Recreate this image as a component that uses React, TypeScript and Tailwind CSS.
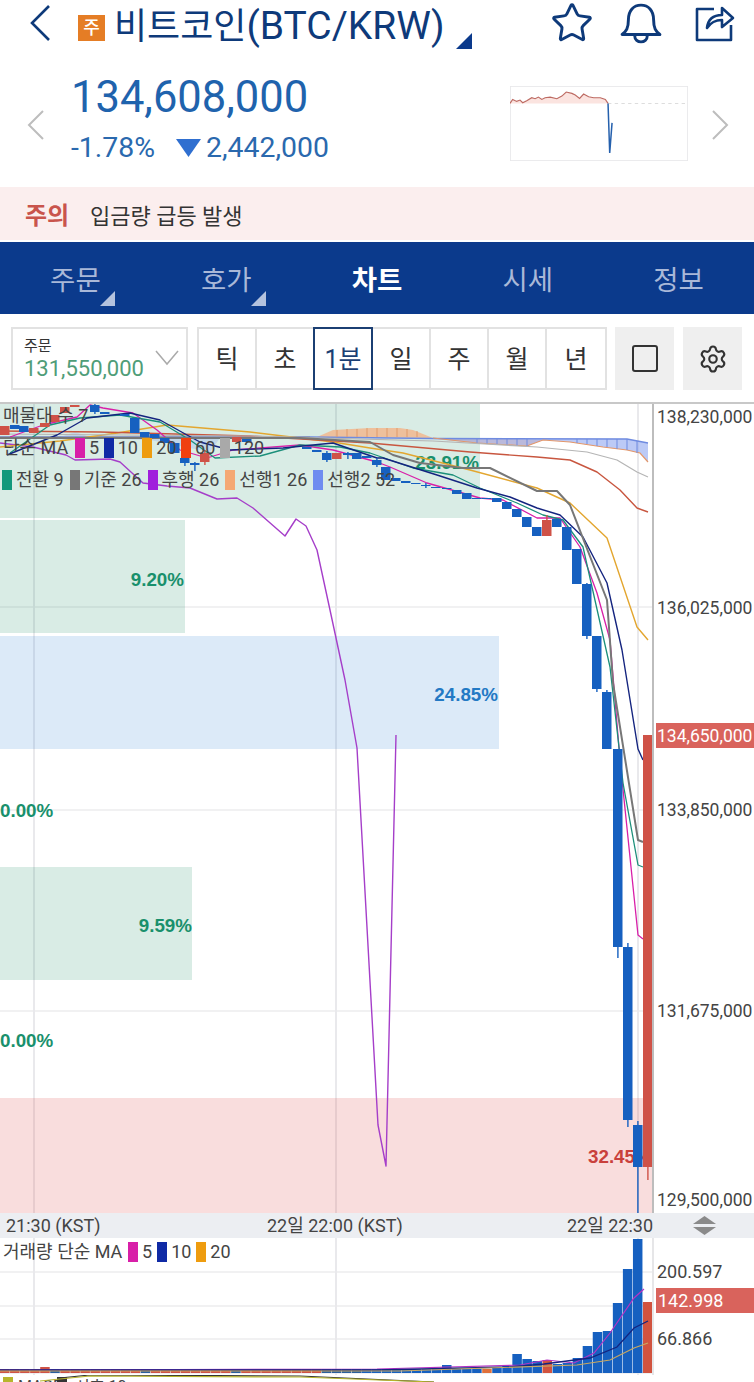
import { Settings, Star } from 'lucide-react';

const BLUE = '#1660c0';
const RED = '#cf5247';

// [x, top, bottom, colour, wickTop, wickBottom]
type Candle = [number, number, number, string, number?, number?];

const candles: Candle[] = [
  [0, 426, 435, RED],
  [10, 425, 429, BLUE],
  [19, 426, 432, BLUE],
  [29, 428, 433, RED],
  [40, 423, 427, RED],
  [50, 415, 422, RED],
  [60, 407, 413, RED],
  [70, 405, 407, RED],
  [90, 405, 412, BLUE, 404, 414],
  [100, 412, 414, BLUE],
  [120, 414, 416, BLUE],
  [130, 418, 433, BLUE],
  [140, 432, 437, BLUE],
  [150, 434, 438, BLUE],
  [160, 438, 443, BLUE],
  [170, 443, 453, BLUE],
  [180, 458, 463, BLUE, 453, 466],
  [190, 463, 465, BLUE, 462, 471],
  [200, 453, 462, RED, 450, 465],
  [232, 437, 442, RED],
  [242, 439, 442, BLUE],
  [302, 447, 449, BLUE],
  [312, 450, 452, BLUE],
  [322, 453, 460, BLUE, 451, 462],
  [332, 453, 459, RED],
  [343, 453, 455, BLUE, 452, 459],
  [352, 453, 459, BLUE],
  [362, 456, 458, BLUE],
  [372, 460, 465, BLUE, 458, 467],
  [381, 467, 480, BLUE],
  [391, 478, 481, BLUE],
  [401, 481, 483, BLUE],
  [411, 483, 484, BLUE],
  [421, 485, 486, BLUE, 483, 488],
  [431, 487, 488, BLUE],
  [442, 488, 489, BLUE],
  [452, 490, 494, BLUE],
  [462, 493, 499, BLUE],
  [472, 498, 499, BLUE],
  [482, 498, 499, BLUE],
  [492, 498, 502, BLUE],
  [502, 502, 509, BLUE],
  [512, 509, 517, BLUE],
  [522, 517, 527, BLUE],
  [532, 527, 536, BLUE],
  [542, 520, 536, RED, 515, 536],
  [552, 519, 527, BLUE],
  [562, 527, 550, BLUE],
  [572, 549, 584, BLUE],
  [582, 584, 636, BLUE, 583, 639],
  [592, 636, 689, BLUE, 636, 692],
  [602, 692, 749, BLUE, 690, 749],
  [613, 749, 947, BLUE, 749, 958],
  [623, 947, 1120, BLUE, 943, 1127],
  [633, 1125, 1167, BLUE, 1121, 1213],
  [643, 735, 1167, RED, 735, 1180],
];

const lines: [string, number, string][] = [
  ['#a53ec9', 1.4, '0,443 33,447 66,455 75,460 110,459 120,462 143,483 167,486 190,488 217,499 237,498 253,508 285,536 296,519 306,526 317,550 330,610 345,680 357,748 378,1125 386,1166 396,735'],
  ['#e3a62f', 1.4, '0,447 60,441 117,433 167,425 250,432 333,442 370,448 403,453 470,470 537,488 570,503 607,538 637,627 648,640'],
  ['#c8563f', 1.4, '0,431 100,432 250,436 370,443 470,452 537,457 570,460 597,472 620,490 637,508 648,512'],
  ['#b5b5b5', 1.2, '0,434 250,436 433,441 537,447 587,452 617,460 637,472 648,477'],
  ['#d81fa8', 1.3, '10,437 43,425 77,417 90,405 103,408 133,413 157,430 180,450 207,458 233,450 300,445 333,450 377,462 390,467 427,483 480,498 503,500 537,518 560,518 580,547 597,593 610,640 620,760 638,935 643,939'],
  ['#1b8f7a', 1.3, '10,453 50,425 80,418 120,415 160,422 190,440 215,458 260,456 300,445 340,447 370,453 413,468 453,475 480,488 517,503 543,515 563,520 583,547 610,667 623,783 638,865 643,867'],
  ['#14247f', 1.4, '7,455 57,435 87,418 130,413 160,420 187,435 200,442 230,450 283,448 333,443 377,458 383,458 437,475 477,488 510,497 537,508 560,515 583,537 607,583 622,650 638,749 643,760'],
  ['#777777', 2, '0,438 300,438 370,442 393,455 420,463 463,468 490,468 537,491 557,491 570,505 607,600 613,683 638,840 643,842'],
];

// hatching of the ichimoku cloud: [x, top, bottom, colour]
const hatch: [number, number, number, string][] = [
  [337, 430, 437, '#e09a6a'],
  [347, 429, 437, '#e09a6a'],
  [357, 429, 437, '#e09a6a'],
  [367, 428, 437, '#e09a6a'],
  [377, 428, 437, '#e09a6a'],
  [387, 428, 437, '#e09a6a'],
  [397, 428, 437, '#e09a6a'],
  [407, 429, 437, '#e09a6a'],
  [417, 431, 437, '#e09a6a'],
  [477, 439, 443, '#6f8be0'],
  [487, 439, 444, '#6f8be0'],
  [497, 439, 444, '#6f8be0'],
  [507, 439, 445, '#6f8be0'],
  [517, 439, 446, '#6f8be0'],
  [527, 439, 446, '#6f8be0'],
  [577, 439, 443, '#6f8be0'],
  [587, 439, 444, '#6f8be0'],
  [597, 439, 446, '#6f8be0'],
  [607, 439, 447, '#6f8be0'],
  [617, 439, 449, '#6f8be0'],
  [627, 439, 450, '#6f8be0'],
  [637, 441, 453, '#6f8be0'],
];

// tops of the volume bars, counted from the last bar leftwards
const volumeTops = [1302, 1239, 1269, 1303, 1331, 1332, 1346, 1358, 1363, 1364, 1360, 1361, 1359, 1354, 1366, 1368, 1369, 1369, 1369, 1369, 1365, 1369, 1369, 1369, 1369, 1370, 1369, 1369, 1370];

function Legend({ color, label }: { color: string; label: string }) {
  return (
    <span className="flex items-center gap-[4px]">
      <span className="h-[20px] w-[10px]" style={{ backgroundColor: color }} />
      <span>{label}</span>
    </span>
  );
}

function PriceChart() {
  return (
    <div className="relative h-[809px] w-[654px] overflow-hidden border-r-2 border-[#bdbdbd]">
      <svg className="absolute left-0 top-0" width="654" height="809" viewBox="0 404 654 809">
        {[607, 810, 1011].map((y) => (
          <line key={y} x1="0" x2="652" y1={y} y2={y} stroke="#ececee" strokeWidth="1.5" />
        ))}
        {[34, 336, 638].map((x) => (
          <line key={x} x1={x} x2={x} y1="404" y2="1213" stroke="#e9e9ec" strokeWidth="2" />
        ))}
        <rect x="0" y="404" width="480" height="114" fill="#12875f" fillOpacity="0.16" />
        <rect x="0" y="520" width="185" height="113" fill="#12875f" fillOpacity="0.16" />
        <rect x="0" y="636" width="499" height="113" fill="#2f80d8" fillOpacity="0.17" />
        <rect x="0" y="867" width="192" height="113" fill="#12875f" fillOpacity="0.16" />
        <rect x="0" y="1098" width="652" height="115" fill="#e04c4c" fillOpacity="0.19" />
      </svg>

      <div className="font-['Liberation_Sans',sans-serif] text-[18.8px] font-bold leading-[22px]">
        <span className="absolute right-[173px] top-[48px] text-[#19906c]">23.91%</span>
        <span className="absolute right-[468px] top-[165px] text-[#19906c]">9.20%</span>
        <span className="absolute right-[154px] top-[280px] text-[#2379c4]">24.85%</span>
        <span className="absolute left-0 top-[396px] text-[#19906c]">0.00%</span>
        <span className="absolute right-[460px] top-[511px] text-[#19906c]">9.59%</span>
        <span className="absolute left-0 top-[626px] text-[#19906c]">0.00%</span>
        <span className="absolute left-[588px] top-[742px] text-[#c9403c]">32.45%</span>
      </div>

      <svg className="absolute left-0 top-0" width="654" height="809" viewBox="0 404 654 809">
        <polygon points="317,437 333,430 370,428 400,428 413,430 433,438" fill="#f4b183" fillOpacity="0.75" />
        <polygon points="433,438 477,443 527,446 543,440 510,439" fill="#f4b183" fillOpacity="0.55" />
        <polygon points="433,439 627,439 648,443 648,462 640,453 627,450 603,447 570,442 543,440 527,446 477,443" fill="#8fa6f0" fillOpacity="0.6" />
        <polyline points="0,437 310,437 433,438.5 627,439 648,443" fill="none" stroke="#6f8be0" strokeWidth="1.5" />
        <polyline points="433,438 477,443 527,446 543,440 570,442 603,447 627,450 640,453 648,462" fill="none" stroke="#e3976a" strokeWidth="1.2" />
        {hatch.map(([x, top, bottom, color]) => (
          <line key={x} x1={x} x2={x} y1={top} y2={bottom} stroke={color} strokeWidth="1" />
        ))}
        <rect x="0" y="436" width="310" height="3" fill="#8a93b0" fillOpacity="0.6" />
        <polygon points="60,437 75,432 90,437 220,438 210,452 150,440" fill="#8fa6f0" fillOpacity="0.3" />
        {lines.map(([color, width, points]) => (
          <polyline key={color} points={points} fill="none" stroke={color} strokeWidth={width} strokeLinejoin="round" />
        ))}
        {candles.map(([x, top, bottom, color, wickTop, wickBottom]) => (
          <g key={x} fill={color}>
            {wickTop !== undefined && wickBottom !== undefined && (
              <rect x={x + 4.2} y={wickTop} width="1.4" height={wickBottom - wickTop} />
            )}
            <rect x={x} y={top} width="9.5" height={bottom - top} />
          </g>
        ))}
      </svg>

      <div className="absolute left-[3px] top-[1px] text-[18px] leading-[22px] text-[#444]">
        <div className="h-[22px]">매물대 수 7</div>
        <div className="mt-[10px] flex h-[22px] items-center">
          <span className="w-[72px]">단순 MA</span>
          <span className="flex gap-[4.5px]">
            <Legend color="#d81fa8" label="5" />
            <Legend color="#0f2aa5" label="10" />
            <Legend color="#ee9c0f" label="20" />
            <Legend color="#f04010" label="60" />
            <Legend color="#a9a9a9" label="120" />
          </span>
        </div>
        <div className="-ml-[1px] mt-[10px] flex h-[22px] items-center gap-[6px] whitespace-nowrap">
          <Legend color="#12987c" label="전환 9" />
          <Legend color="#777777" label="기준 26" />
          <Legend color="#a01fdc" label="후행 26" />
          <Legend color="#f4a874" label="선행1 26" />
          <Legend color="#6f8cf0" label="선행2 52" />
        </div>
      </div>
    </div>
  );
}

function VolumeChart() {
  return (
    <div className="relative h-[137px] w-[654px] overflow-hidden border-r-2 border-[#e6e6e8]">
      <svg className="absolute left-0 top-0" width="654" height="137" viewBox="0 1238 654 137">
        {[1272, 1306, 1339, 1373].map((y) => (
          <line key={y} x1="0" x2="652" y1={y} y2={y} stroke="#ececee" strokeWidth="1.5" />
        ))}
        {[34, 336, 638].map((x) => (
          <line key={x} x1={x} x2={x} y1="1238" y2="1375" stroke="#e9e9ec" strokeWidth="2" />
        ))}
        {Array.from({ length: 37 }, (_, i) => (
          <rect
            key={i}
            x={i * 10.05}
            y={i === 4 ? 1367 : 1369}
            width="9.5"
            height={i === 4 ? 6 : 4}
            fill={i % 9 === 5 || i > 31 ? '#2a5f9e' : '#cf5247'}
          />
        ))}
        {volumeTops.map((top, i) => (
          <rect
            key={i}
            x={643 - i * 10.05}
            y={top}
            width="9.5"
            height={1373 - top}
            fill={i === 0 || i === 10 ? '#d1533f' : i === 16 ? '#e0703a' : BLUE}
          />
        ))}
        <polyline points="0,1370 377,1369 520,1365 547,1360 574,1363 594,1353 610,1333 634,1298 644,1289" fill="none" stroke="#b533c4" strokeWidth="1.2" />
        <polyline points="0,1370 377,1370 510,1367 544,1364 590,1358 617,1347 634,1328 648,1321" fill="none" stroke="#14247f" strokeWidth="1.3" />
        <polyline points="0,1371 400,1371 577,1365 610,1360 634,1348 648,1343" fill="none" stroke="#c9a860" strokeWidth="1.2" />
      </svg>
      <div className="absolute left-[3px] top-[3px] flex h-[22px] items-center gap-[5px] text-[18px] leading-[22px] text-[#444]">
        <span className="w-[120px] whitespace-nowrap">거래량 단순 MA</span>
        <Legend color="#d81fa8" label="5" />
        <Legend color="#0f2aa5" label="10" />
        <Legend color="#ee9c0f" label="20" />
      </div>
    </div>
  );
}

export default function App() {
  return (
    <div className="h-[1382px] w-[754px] overflow-hidden bg-white font-['Roboto','Noto_Sans_CJK_KR',sans-serif]">
      <header className="relative flex h-[68px] items-start">
        <svg className="ml-[29px] mt-[5px]" width="24" height="36" viewBox="0 0 24 36" fill="none" stroke="#0e3a7a" strokeWidth="2.6">
          <polyline points="20,1 3,18 20,35" />
        </svg>
        <span className="ml-[25px] mt-[15px] flex h-[26px] w-[27px] items-center justify-center bg-[#e57d25] text-[18px] font-medium leading-none text-white">
          주
        </span>
        <h1 className="ml-[9px] mt-[1px] whitespace-nowrap text-[36px] font-normal leading-[50px] text-[#0e3a7a]">
          비트코인<span className="text-[39px]">(BTC/KRW)</span>
        </h1>
        <svg className="absolute left-[456px] top-[33px]" width="16" height="16" viewBox="0 0 16 16">
          <polygon points="16,0 16,16 0,16" fill="#0b3a8c" />
        </svg>
        <div className="absolute left-[550px] top-[1px] flex items-center text-[#0e3a7a]">
          <Star size={44} strokeWidth={1.6} />
          <svg className="ml-[26px]" width="42" height="42" viewBox="0 0 40 40" fill="none" stroke="#0e3a7a" strokeWidth="2.8" strokeLinejoin="round">
            <path d="M2 31c4-3 6-6 6-14C8 8 13 3 20 3s12 5 12 14c0 8 2 11 6 14z" />
            <path d="M14 32c0 4 3 6 6 6s6-2 6-6" />
          </svg>
          <svg className="ml-[31px]" width="42" height="40" viewBox="0 0 42 40" fill="none" stroke="#0e3a7a" strokeWidth="2.6" strokeLinejoin="round">
            <path d="M21 6H4v31h34V22" />
            <path d="M14 25c1-9 7-13 15-13V5l11 10-11 9v-7c-7 0-11 2-15 8z" />
          </svg>
        </div>
      </header>

      <section className="flex h-[119px]">
        <svg className="ml-[27px] mt-[42px]" width="18" height="30" viewBox="0 0 18 30" fill="none" stroke="#bdbdbd" strokeWidth="2">
          <polyline points="16,1 2,15 16,29" />
        </svg>
        <div className="ml-[26px]">
          <div className="mt-[3px] text-[43.5px] leading-[54px] text-[#1f63ad]">134,608,000</div>
          <div className="mt-[5px] flex items-center text-[28.4px] leading-[36px] text-[#2a69ae]">
            <span>-1.78%</span>
            <svg className="ml-[21px] mr-[5px]" width="25" height="18" viewBox="0 0 25 18">
              <polygon points="0,0 25,0 12.5,18" fill="#2f6fd0" />
            </svg>
            <span>2,442,000</span>
          </div>
        </div>
        <svg className="absolute left-[510px] top-[86px]" width="178" height="75" viewBox="0 0 532 224">
          <rect x="1" y="1" width="530" height="222" fill="white" stroke="#e8e8ea" strokeWidth="3" />
          <polygon points="0,52 8,40 20,46 30,42 38,50 50,44 65,35 75,38 85,33 95,40 105,35 120,33 140,38 155,30 168,18 185,22 195,27 208,37 220,24 235,32 250,35 270,35 285,40 293,52" fill="#fbe4e0" />
          <line x1="293" x2="532" y1="52" y2="52" stroke="#dddddd" strokeWidth="3" strokeDasharray="10 10" />
          <polyline points="0,52 8,40 20,46 30,42 38,50 50,44 65,35 75,38 85,33 95,40 105,35 120,33 140,38 155,30 168,18 185,22 195,27 208,37 220,24 235,32 250,35 270,35 285,40 293,52" fill="none" stroke="#bd6a62" strokeWidth="3.5" />
          <polyline points="293,52 298,200 305,110" fill="none" stroke="#2560ad" strokeWidth="4.5" />
        </svg>
        <svg className="absolute left-[711px] top-[110px]" width="18" height="30" viewBox="0 0 18 30" fill="none" stroke="#bdbdbd" strokeWidth="2">
          <polyline points="2,1 16,15 2,29" />
        </svg>
      </section>

      <div className="flex h-[53px] items-center bg-[#fbeeee] pl-[25px] pt-[5px]">
        <span className="w-[65px] text-[24px] font-bold text-[#c9544c]">주의</span>
        <span className="text-[22px] text-[#333]">입금량 급등 발생</span>
      </div>

      <nav className="mt-[2px] grid h-[72px] grid-cols-5 bg-[#0b3a8c] text-[27.5px] text-[#a9b8d8]">
        {['주문', '호가', '차트', '시세', '정보'].map((tab, i) => (
          <div key={tab} className="relative flex items-center justify-center pt-[6px]">
            <span className={i === 2 ? 'font-bold text-white' : ''}>{tab}</span>
            {i < 2 && (
              <svg className="absolute left-[100px] top-[49px]" width="15" height="15" viewBox="0 0 15 15">
                <polygon points="15,0 15,15 0,15" fill="#b4c2de" />
              </svg>
            )}
          </div>
        ))}
      </nav>

      <div className="flex h-[88px] items-start pl-[11px] pt-[13px]">
        <div className="relative h-[63px] w-[177px] border-2 border-[#e2e2e2] pl-[11px]">
          <div className="mt-[8px] text-[15px] leading-[18px] text-[#333]">주문</div>
          <div className="text-[22px] leading-[28px] text-[#4f9d78]">131,550,000</div>
          <svg className="absolute left-[142px] top-[21px]" width="24" height="16" viewBox="0 0 24 16" fill="none" stroke="#aaaaaa" strokeWidth="1.5">
            <polyline points="1,1 12,14 23,1" />
          </svg>
        </div>
        <div className="ml-[9px] grid h-[63px] w-[410px] grid-cols-7 border-2 border-[#e2e2e2] text-[25px] text-[#333]">
          {['틱', '초', '1분', '일', '주', '월', '년'].map((label) => (
            <div
              key={label}
              className={
                label === '1분'
                  ? 'z-10 -my-[2px] -ml-[2px] flex items-center justify-center border-2 border-[#1b3f73] pt-[2px] text-[#1b3f73]'
                  : 'flex items-center justify-center border-r-2 border-[#e2e2e2] pt-[2px] last:border-r-0'
              }
            >
              {label}
            </div>
          ))}
        </div>
        <div className="ml-[8px] flex h-[63px] w-[59px] items-center justify-center bg-[#efefef]">
          <div className="h-[27px] w-[26px] rounded-[3px] border-2 border-[#333]" />
        </div>
        <div className="ml-[9px] flex h-[63px] w-[59px] items-center justify-center bg-[#efefef] text-[#333]">
          <Settings size={30} strokeWidth={1.7} />
        </div>
      </div>

      <div className="flex h-[811px] border-t-2 border-[#c8c8c8]">
        <PriceChart />
        <div className="relative flex-1 text-[17.5px] leading-[22px] text-[#444]">
          <span className="absolute left-[3px] top-[2px]">138,230,000</span>
          <span className="absolute left-[3px] top-[193px]">136,025,000</span>
          <span className="absolute left-[3px] top-[395px]">133,850,000</span>
          <span className="absolute left-[3px] top-[596px]">131,675,000</span>
          <span className="absolute left-[3px] top-[785px]">129,500,000</span>
          <span className="absolute left-[2px] top-[319px] flex h-[25px] w-[98px] items-center bg-[#d9635c] pl-[1px] text-white">
            134,650,000
          </span>
        </div>
      </div>

      <div className="relative h-[25px] bg-[#eceef2] text-[18px] leading-[25px] text-[#444]">
        <div className="relative h-[25px] w-[654px] overflow-hidden whitespace-nowrap">
          <span className="absolute left-[6px]">21:30 (KST)</span>
          <span className="absolute left-[267px]">22일 22:00 (KST)</span>
          <span className="absolute left-[567px]">22일 22:30</span>
        </div>
        <svg className="absolute left-[693px] top-[3px]" width="23" height="19" viewBox="0 0 23 19">
          <polygon points="11.5,0 23,8 0,8" fill="#8a8a8a" />
          <polygon points="0,11 23,11 11.5,19" fill="#8a8a8a" />
        </svg>
      </div>

      <div className="flex h-[137px]">
        <VolumeChart />
        <div className="relative flex-1 text-[18px] leading-[22px] text-[#444]">
          <span className="absolute left-[3px] top-[23px]">200.597</span>
          <span className="absolute left-[2px] top-[50px] flex h-[25px] w-[98px] items-center bg-[#d9635c] pl-[2px] text-white">
            142.998
          </span>
          <span className="absolute left-[3px] top-[90px]">66.866</span>
        </div>
      </div>

      <div className="relative flex h-[7px] items-start overflow-hidden pl-[3px] pt-[2px] text-[16px] leading-[20px] text-[#444]">
        <span className="h-[10px] w-[10px] bg-[#b7b52c]" />
        <span className="ml-[5px] w-[39px]">MACD</span>
        <span className="h-[10px] w-[10px] bg-[#333]" />
        <span className="ml-[8px]">시호 10</span>
        <svg className="absolute left-0 top-0" width="654" height="7" viewBox="0 0 654 7" fill="none">
          <polyline points="60,3 90,0 300,1 434,7" stroke="#333" strokeWidth="1.2" />
          <polyline points="40,6 90,1 300,2 434,7" stroke="#b7b52c" strokeWidth="1.2" />
        </svg>
      </div>
    </div>
  );
}
